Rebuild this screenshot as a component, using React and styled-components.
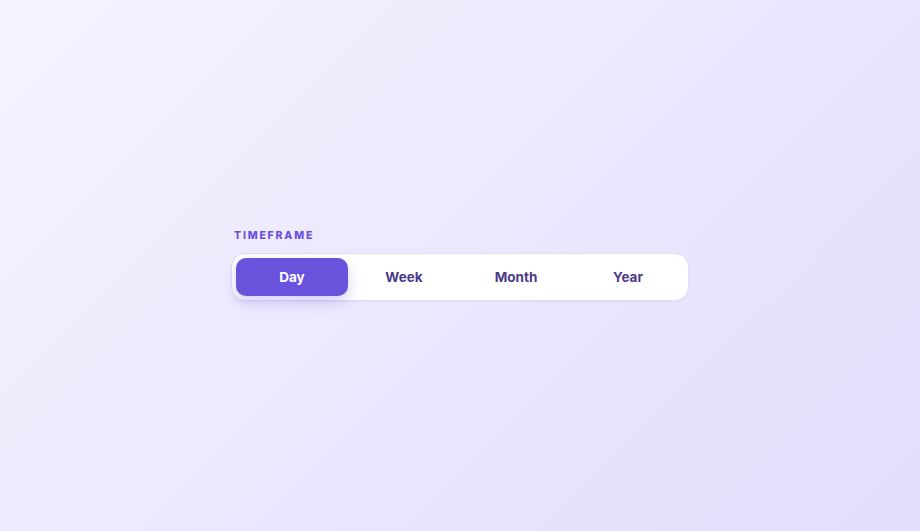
import React, { useState } from "react";
import styled, { createGlobalStyle } from "styled-components";

const GlobalStyle = createGlobalStyle`
  html, body {
    margin: 0;
    padding: 0;
    height: 100%;
  }
  body {
    font-family: Inter, "Noto Sans", sans-serif;
  }
  #root {
    height: 100%;
  }
`;

const Page = styled.div`
  min-height: 100vh;
  box-sizing: border-box;
  display: flex;
  justify-content: center;
  align-items: flex-start;
  padding-top: 229px;
  background: linear-gradient(135deg, #f5f3ff 0%, #ebe6fd 55%, #e4dcfd 100%);
`;

const Group = styled.div`
  display: flex;
  flex-direction: column;
  gap: 10px;
  width: 458px;
`;

const Label = styled.div`
  padding-left: 3px;
  font-size: 10.5px;
  font-weight: 800;
  letter-spacing: 1.8px;
  color: #6b4fdc;
  line-height: 14px;
`;

const Segmented = styled.div`
  display: grid;
  grid-template-columns: repeat(4, 1fr);
  padding: 4px;
  background: #ffffff;
  border: 1px solid #e2daf9;
  border-radius: 14px;
  box-shadow: 0 1px 2px rgba(90, 70, 180, 0.05);
`;

const Option = styled.button`
  height: 38px;
  padding: 0;
  border: none;
  border-radius: 10px;
  font-family: inherit;
  font-size: 13.5px;
  font-weight: 700;
  cursor: pointer;
  background: ${(p) => (p.$active ? "#6a53dc" : "transparent")};
  color: ${(p) => (p.$active ? "#ffffff" : "#4b3a87")};
  box-shadow: ${(p) =>
    p.$active ? "0 6px 14px rgba(106, 83, 220, 0.28)" : "none"};
`;

const options = ["Day", "Week", "Month", "Year"];

export default function App() {
  const [active, setActive] = useState("Day");

  return (
    <>
      <GlobalStyle />
      <Page>
        <Group>
          <Label>TIMEFRAME</Label>
          <Segmented>
            {options.map((o) => (
              <Option key={o} $active={active === o} onClick={() => setActive(o)}>
                {o}
              </Option>
            ))}
          </Segmented>
        </Group>
      </Page>
    </>
  );
}
